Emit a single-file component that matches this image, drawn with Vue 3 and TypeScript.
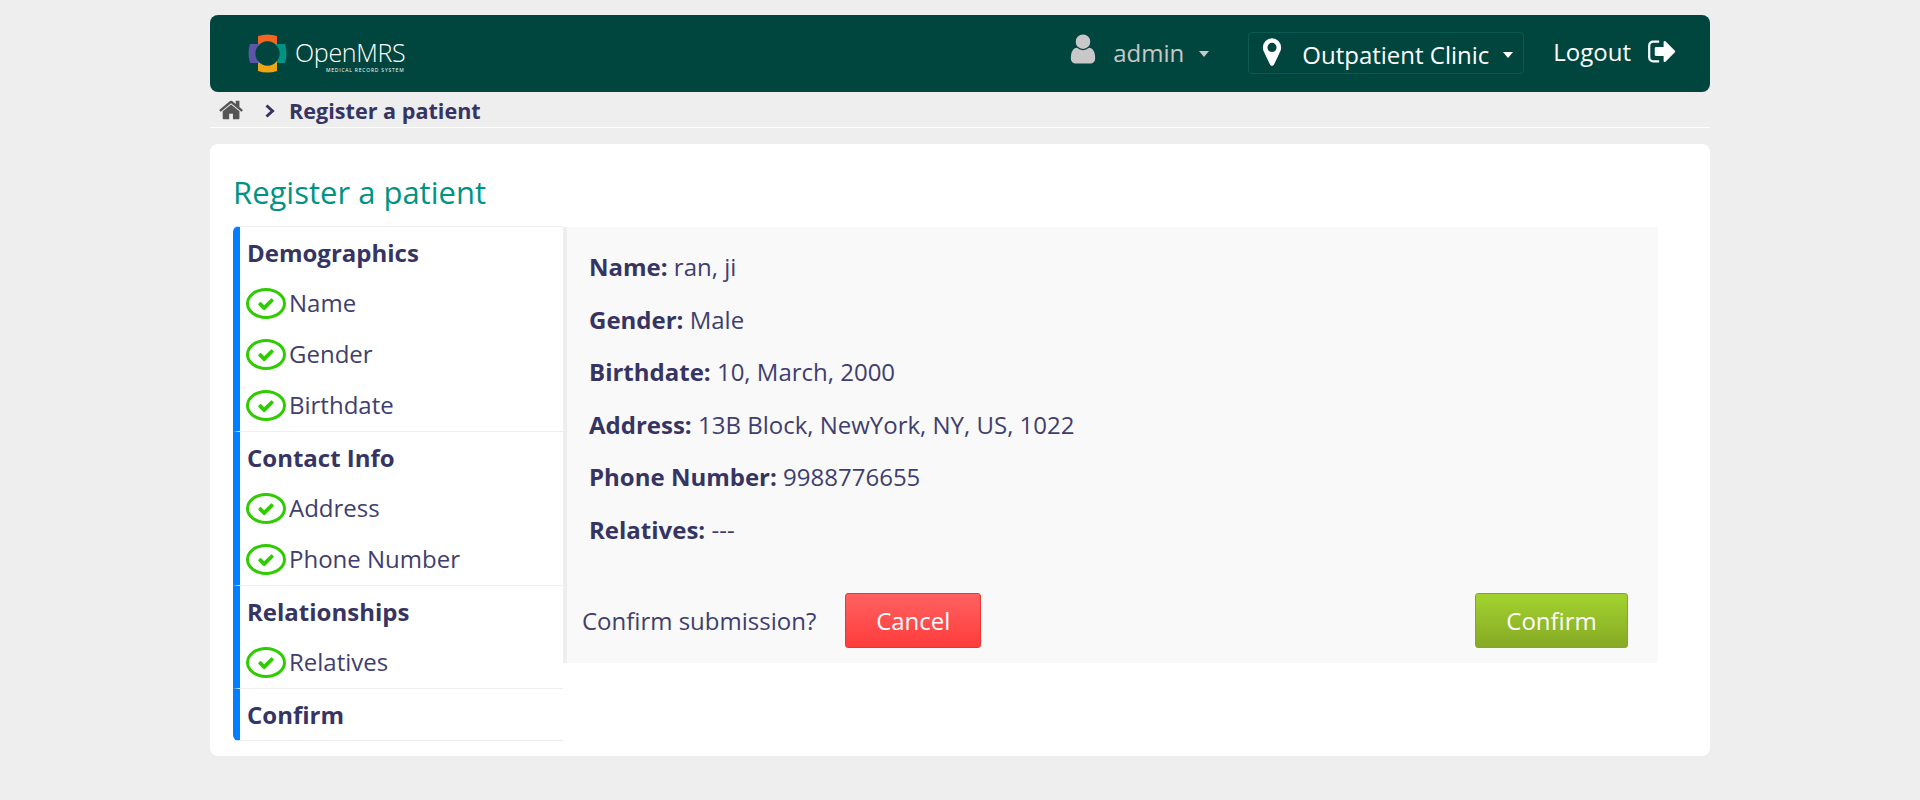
<script setup lang="ts">
const sections = [
  { title: 'Demographics', items: ['Name', 'Gender', 'Birthdate'] },
  { title: 'Contact Info', items: ['Address', 'Phone Number'] },
  { title: 'Relationships', items: ['Relatives'] },
  { title: 'Confirm', items: [] as string[] },
]

const details = [
  { label: 'Name:', value: 'ran, ji' },
  { label: 'Gender:', value: 'Male' },
  { label: 'Birthdate:', value: '10, March, 2000' },
  { label: 'Address:', value: '13B Block, NewYork, NY, US, 1022' },
  { label: 'Phone Number:', value: '9988776655' },
  { label: 'Relatives:', value: '---' },
]
</script>

<template>
  <div class="page">
    <!-- Header -->
    <header class="topbar">
      <div class="logo">
        <svg class="logo-mark" viewBox="0 0 39 39" width="39" height="39">
          <path d="M10 2Q19.500 -1 29 2L29 12A12 12 0 0 0 10 12Z" fill="#f26522" />
          <path d="M37 10Q40 19.500 37 29L27 29A12 12 0 0 0 27 10Z" fill="#009384" />
          <path d="M10 37Q19.500 40 29 37L29 27A12 12 0 0 1 10 27Z" fill="#eea616" />
          <path d="M2 10Q-1 19.500 2 29L12 29A12 12 0 0 1 12 10Z" fill="#5b57a6" />
        </svg>
        <div class="logo-text">
          <span class="logo-name">OpenMRS</span>
          <span class="logo-sub">MEDICAL RECORD SYSTEM</span>
        </div>
      </div>

      <div class="nav">
        <div class="nav-user">
          <svg class="ico-user" viewBox="0 0 1792 1792" width="34" height="34">
            <path d="M1536 1399q0 109-62.500 187t-150.500 78h-854q-88 0-150.500-78t-62.500-187q0-85 8.500-160.500t31.500-152 58.500-131 94-89 134.500-34.500q131 128 313 128t313-128q76 0 134.500 34.500t94 89 58.500 131 31.500 152 8.500 160.500zm-256-887q0 159-112.500 271.500t-271.500 112.500-271.500-112.500-112.500-271.500 112.500-271.500 271.500-112.500 271.500 112.500 112.500 271.500z" fill="#c8c8c8" />
          </svg>
          <span class="user-name">admin</span>
          <span class="caret caret-grey" />
        </div>
        <div class="nav-location">
          <svg class="ico-pin" viewBox="0 0 1792 1792" width="32" height="32">
            <path d="M1152 640q0-106-75-181t-181-75-181 75-75 181 75 181 181 75 181-75 75-181zm256 0q0 109-33 179l-364 774q-16 33-47.500 52t-67.500 19-67.500-19-46.500-52l-365-774q-33-70-33-179 0-212 150-362t362-150 362 150 150 362z" fill="#fff" />
          </svg>
          <span class="loc-name">Outpatient Clinic</span>
          <span class="caret" />
        </div>
        <div class="nav-logout">
          <span>Logout</span>
          <svg viewBox="0 0 1792 1792" width="31" height="31">
            <path d="M704 1440q0 4 1 20t.5 26.500-3 23.500-10 19.500-20.500 6.500h-320q-119 0-203.500-84.500t-84.500-203.500v-704q0-119 84.500-203.500t203.500-84.500h320q13 0 22.500 9.500t9.500 22.500q0 4 1 20t.5 26.500-3 23.500-10 19.500-20.500 6.500h-320q-66 0-113 47t-47 113v704q0 66 47 113t113 47h312l11.500 1 11.500 3 8 5.500 7 9 2 13.500zm928-544q0 26-19 45l-544 544q-19 19-45 19t-45-19-19-45v-288h-448q-26 0-45-19t-19-45v-384q0-26 19-45t45-19h448v-288q0-26 19-45t45-19 45 19l544 544q19 19 19 45z" fill="#fff" />
          </svg>
        </div>
      </div>
    </header>

    <!-- Breadcrumb -->
    <nav class="crumbs">
      <svg viewBox="0 0 1792 1792" width="26" height="26">
        <path d="M1408 992v480q0 26-19 45t-45 19h-384v-384h-256v384h-384q-26 0-45-19t-19-45v-480q0-1 .5-3t.5-3l575-474 575 474q1 2 1 6zm223-69l-62 74q-8 9-21 11h-3q-13 0-21-7l-692-577-692 577q-12 8-24 7-13-2-21-11l-62-74q-8-10-7-23.500t11-21.500l719-599q32-26 76-26t76 26l244 204v-195q0-14 9-23t23-9h192q14 0 23 9t9 23v408l219 182q10 8 11 21.500t-7 23.500z" fill="#555" />
      </svg>
      <svg class="crumb-sep" viewBox="0 0 10 14" width="10" height="14">
        <path d="M1.500 1.500L7.500 7L1.500 12.500" fill="none" stroke="#363463" stroke-width="3" />
      </svg>
      <span class="crumb-current">Register a patient</span>
    </nav>

    <!-- Main card -->
    <main class="card">
      <h2 class="title">Register a patient</h2>
      <div class="wizard">
        <aside class="steps">
          <section v-for="s in sections" :key="s.title" class="step">
            <div class="step-title">{{ s.title }}</div>
            <div v-for="item in s.items" :key="item" class="step-item">
              <span class="tick">
                <svg viewBox="0 0 1792 1792" width="18" height="18">
                  <path d="M1671 566q0 40-28 68l-724 724-136 136q-28 28-68 28t-68-28l-136-136-362-362q-28-28-28-68t28-68l136-136q28-28 68-28t68 28l294 295 656-657q28-28 68-28t68 28l136 136q28 28 28 68z" fill="#2ecc00" />
                </svg>
              </span>
              <span class="item-label">{{ item }}</span>
            </div>
          </section>
        </aside>

        <div class="summary">
          <div class="details">
            <p v-for="d in details" :key="d.label" class="detail">
              <b>{{ d.label }}</b> {{ d.value }}
            </p>
          </div>
          <div class="actions">
            <span class="ask">Confirm submission?</span>
            <button class="btn btn-cancel">Cancel</button>
            <button class="btn btn-confirm">Confirm</button>
          </div>
        </div>
      </div>
    </main>
  </div>
</template>

<style>
body {
  margin: 0;
  background: #eeeeee;
}
</style>

<style scoped>
.page {
  width: 1500px;
  margin: 0 auto;
  padding-top: 15px;
  font-family: 'Open Sans', sans-serif;
  color: #363463;
}

/* Header */
.topbar {
  height: 77px;
  box-sizing: border-box;
  background: #00463f;
  border-radius: 8px;
  padding: 0 32px 0 38px;
  display: flex;
  align-items: center;
  justify-content: space-between;
}

.logo {
  display: flex;
  align-items: center;
  gap: 8px;
}

.logo-mark { display: block; }

.logo-text {
  display: flex;
  flex-direction: column;
  align-items: flex-end;
  color: #fff;
  margin-top: 4px;
}

.logo-name {
  font-size: 25px;
  line-height: 28px;
  font-weight: 300;
  letter-spacing: -0.3px;
}

.logo-sub {
  font-size: 5px;
  line-height: 8px;
  letter-spacing: 0.8px;
  margin-right: 1px;
}

.nav {
  display: flex;
  align-items: center;
  color: #fff;
  font-size: 24px;
  margin-top: -4px;
}

.nav-user {
  display: flex;
  align-items: center;
  color: #c8c8c8;
  margin-right: 39px;
}

.ico-user { margin-right: 13px; margin-top: -6px; }

.user-name { font-weight: 400; margin-top: 2px; }

.caret {
  width: 0;
  height: 0;
  border-left: 5px solid transparent;
  border-right: 5px solid transparent;
  border-top: 6px solid #fff;
  margin-left: 14px;
  margin-top: 5px;
}

.caret-grey { border-top-color: #c8c8c8; margin-left: 15px; }

.nav-location {
  height: 42px;
  width: 276px;
  box-sizing: border-box;
  border: 1px solid #0a5a52;
  border-radius: 4px;
  display: flex;
  align-items: center;
  padding-left: 7px;
  margin-right: 29px;
  margin-top: 2px;
}

.ico-pin { margin-top: -2px; }

.loc-name { margin-left: 14px; margin-top: 3px; white-space: nowrap; }

.nav-logout {
  display: flex;
  align-items: center;
  gap: 16px;
}

/* Breadcrumb */
.crumbs {
  height: 36px;
  box-sizing: border-box;
  border-bottom: 1px solid #fff;
  display: flex;
  align-items: center;
  padding-left: 9px;
}

.crumb-sep { margin-left: 20px; margin-right: 14px; margin-top: 3px; }

.crumb-current {
  font-size: 21.600px;
  font-weight: 700;
  margin-top: 2px;
}

/* Card */
.card {
  margin-top: 16px;
  height: 612px;
  box-sizing: border-box;
  background: #fff;
  border-radius: 8px;
  padding: 28px 52px 0 23px;
}

.title {
  margin: 0 0 15px;
  font-size: 31px;
  line-height: 40px;
  font-weight: 400;
  color: #009384;
}

.wizard {
  display: flex;
  align-items: flex-start;
}

/* Steps */
.steps {
  width: 330px;
  flex-shrink: 0;
  margin-top: -1px;
}

.step {
  border-left: 7px solid #007fff;
  border-bottom: 1px solid #eee;
}

.step:first-child {
  border-top: 1px solid #eee;
  border-top-left-radius: 6px;
}

.step:last-child { border-bottom-left-radius: 6px; }

.step-title {
  height: 51px;
  padding-left: 7px;
  font-size: 24px;
  font-weight: 700;
  line-height: 51px;
}

.step-item {
  height: 51px;
  display: flex;
  align-items: center;
  padding-left: 6px;
  font-size: 24px;
  font-weight: 400;
  color: #403e6e;
}

.item-label { margin-top: -2px; }

.tick {
  width: 40px;
  height: 31px;
  box-sizing: border-box;
  border: 3px solid #2ecc00;
  border-radius: 50%;
  display: flex;
  align-items: center;
  justify-content: center;
  margin-right: 3px;
}

/* Summary */
.summary {
  flex: 1;
  height: 436px;
  box-sizing: border-box;
  background: #f9f9f9;
  border-left: 4px solid #eee;
  display: flex;
  flex-direction: column;
  justify-content: space-between;
}

.details { padding: 14px 0 0 22px; }

.detail {
  margin: 0;
  height: 52.500px;
  line-height: 52.500px;
  font-size: 24px;
  font-weight: 400;
  color: #403e6e;
}

.detail b { font-weight: 700; color: #363463; }

.actions {
  display: flex;
  align-items: center;
  padding: 0 30px 15px 15px;
}

.ask {
  font-size: 24px;
  font-weight: 400;
  margin-right: 29px;
  color: #403e6e;
}

.btn {
  height: 55px;
  border-radius: 3px;
  color: #fff;
  font-family: inherit;
  font-size: 24px;
  padding: 0;
}

.btn-cancel {
  width: 136px;
  border: 1px solid #ee3333;
  background: linear-gradient(#ff6161, #ff3c3c);
}

.btn-confirm {
  width: 153px;
  margin-left: auto;
  border: 1px solid #7fa828;
  background: linear-gradient(#a3d22f, #86aa24);
}
</style>
